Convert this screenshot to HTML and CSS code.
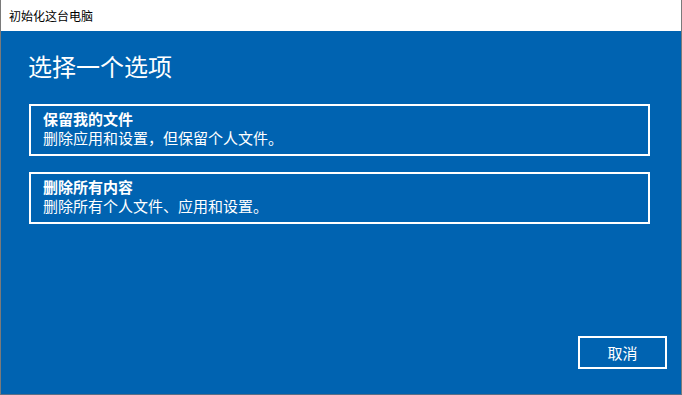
FILE: index.html
```html
<!DOCTYPE html>
<html lang="zh-CN">
<head>
<meta charset="utf-8">
<link rel="stylesheet" href="styles.css">
</head>
<body>
<div class="window">
  <div class="titlebar">初始化这台电脑</div>
  <div class="content">
    <h1 class="heading">选择一个选项</h1>
    <div class="option">
      <div class="option-title">保留我的文件</div>
      <div class="option-desc">删除应用和设置，但保留个人文件。</div>
    </div>
    <div class="option">
      <div class="option-title">删除所有内容</div>
      <div class="option-desc">删除所有个人文件、应用和设置。</div>
    </div>
    <div class="footer">
      <div class="button">取消</div>
    </div>
  </div>
</div>
</body>
</html>
```
FILE: styles.css
```css
html, body {
  margin: 0;
  padding: 0;
}
body {
  font-family: "Noto Sans CJK SC", "Noto Sans", sans-serif;
  width: 682px;
  height: 395px;
  overflow: hidden;
}
.window {
  box-sizing: border-box;
  width: 682px;
  height: 395px;
  border-left: 1px solid #7a7a7a;
  border-right: 1px solid #7a7a7a;
  border-bottom: 1px solid #5a6f88;
  display: flex;
  flex-direction: column;
  background: #0063b1;
}
.titlebar {
  height: 31px;
  background: #ffffff;
  color: #000000;
  font-size: 12px;
  line-height: 31px;
  padding-left: 8px;
  flex: none;
}
.content {
  flex: 1;
  display: flex;
  flex-direction: column;
  padding: 0 14px 0 27px;
  color: #ffffff;
}
.heading {
  margin: 19px 0 22px 0;
  font-size: 24px;
  font-weight: normal;
  line-height: 32px;
}
.option {
  width: 621px;
  box-sizing: border-box;
  margin-left: 1px;
  border: 2px solid #ffffff;
  padding: 3px 12px 7px 12px;
  margin-bottom: 16px;
  font-size: 15px;
  line-height: 19px;
}
.option-title {
  font-weight: bold;
}
.footer {
  margin-top: auto;
  display: flex;
  justify-content: flex-end;
  padding-bottom: 25px;
}
.button {
  box-sizing: border-box;
  width: 89px;
  height: 33px;
  border: 2px solid #ffffff;
  font-size: 15px;
  line-height: 29px;
  text-align: center;
}
```
